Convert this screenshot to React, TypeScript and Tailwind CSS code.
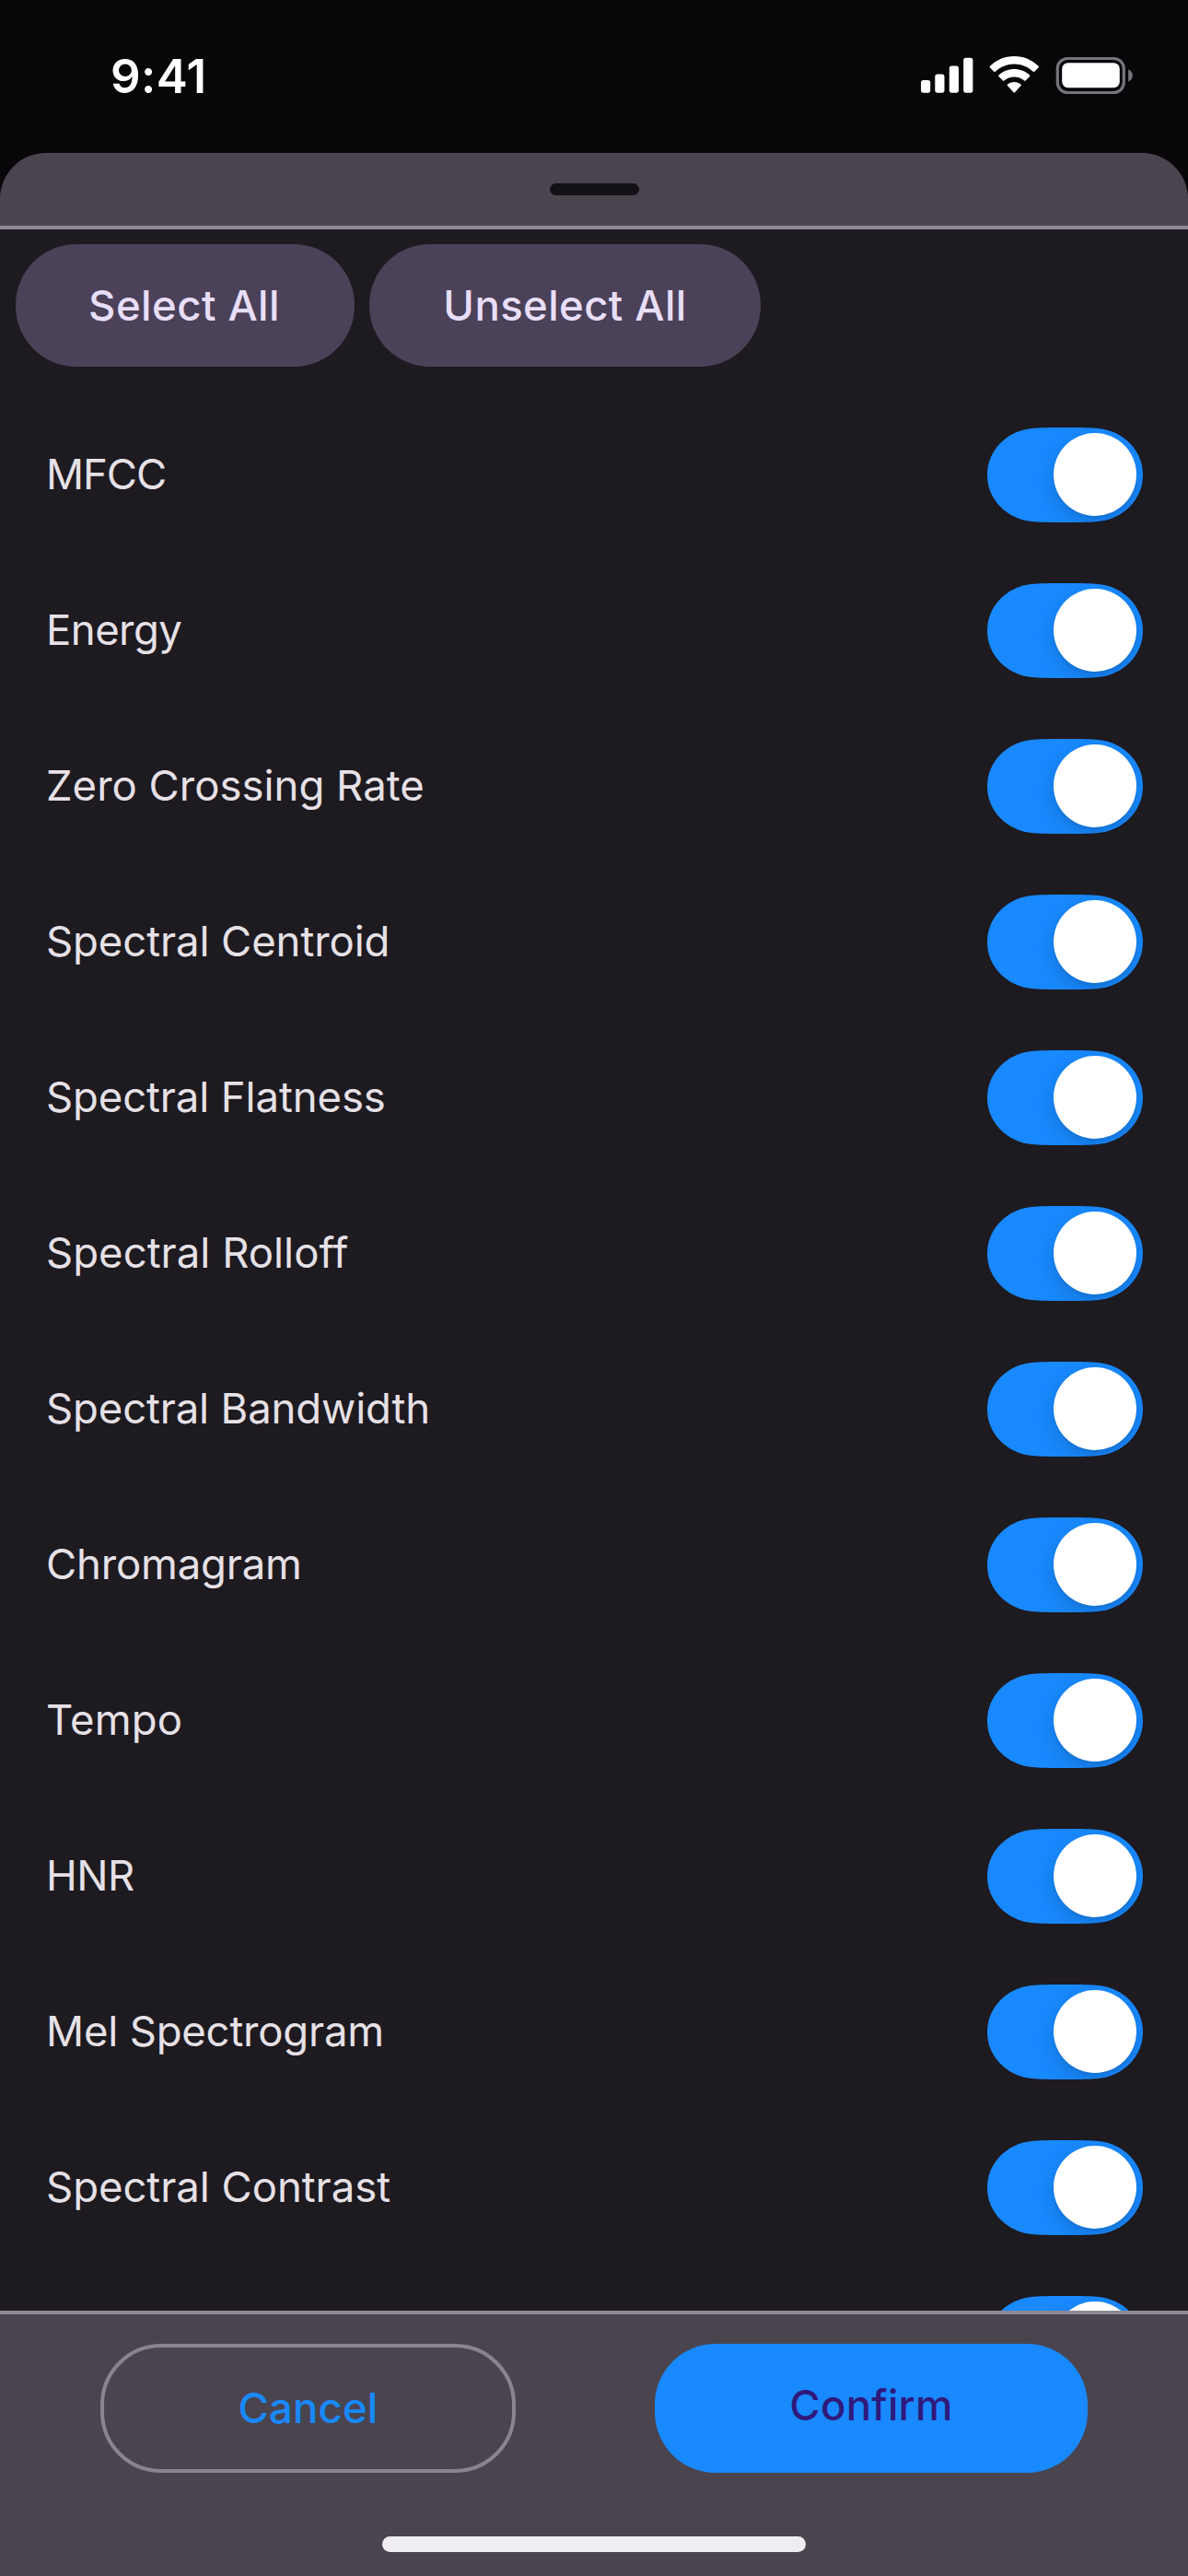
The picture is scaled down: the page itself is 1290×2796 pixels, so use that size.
import React, { useState } from "react";

const FEATURES = [
  { name: "MFCC", tracking: "tracking-[-1.1px]" },
  { name: "Energy", tracking: "tracking-[-0.55px]" },
  { name: "Zero Crossing Rate", tracking: "tracking-[0px]" },
  { name: "Spectral Centroid", tracking: "tracking-[-0.1px]" },
  { name: "Spectral Flatness", tracking: "tracking-[-0.12px]" },
  { name: "Spectral Rolloff", tracking: "tracking-[0.02px]" },
  { name: "Spectral Bandwidth", tracking: "tracking-[-0.15px]" },
  { name: "Chromagram", tracking: "tracking-[-0.2px]" },
  { name: "Tempo", tracking: "tracking-[0.15px]" },
  { name: "HNR", tracking: "tracking-[-0.6px]" },
  { name: "Mel Spectrogram", tracking: "tracking-[-0.2px]" },
  { name: "Spectral Contrast", tracking: "tracking-[-0.05px]" },
  { name: "", tracking: "" },
];

function StatusIcons() {
  return (
    <svg width="230" height="42" viewBox="1000 61 230 42" fill="#fff" aria-hidden="true">
      <rect x="1000" y="87" width="10.2" height="13.7" rx="2.6" />
      <rect x="1015.3" y="80.5" width="10.2" height="20.2" rx="2.6" />
      <rect x="1030.8" y="71.5" width="10.2" height="29.2" rx="2.6" />
      <rect x="1046.2" y="62.7" width="10.2" height="38" rx="2.6" />
      <path d="M1101.3 61C1091.400 61 1081.700 65 1074.900 71.800Q1074.300 72.500 1074.900 73.200L1079.300 77.800Q1080 78.400 1080.700 77.800C1086.400 72.400 1093.600 69.400 1101.300 69.400C1109 69.400 1116.200 72.400 1121.900 77.800Q1122.600 78.400 1123.300 77.800L1127.700 73.200Q1128.300 72.500 1127.700 71.800C1120.900 65 1111.200 61 1101.300 61Z" />
      <path d="M1101.300 75C1095 75 1089.100 77.300 1084.500 81.500Q1083.800 82.200 1084.500 82.900L1089 87.500Q1089.700 88.100 1090.400 87.500C1093.400 84.900 1097.200 83.400 1101.300 83.400C1105.400 83.400 1109.200 84.900 1112.200 87.500Q1112.900 88.100 1113.600 87.500L1118.100 82.900Q1118.800 82.200 1118.100 81.500C1113.500 77.300 1107.600 75 1101.300 75Z" />
      <path d="M1101.300 89C1098.600 89 1096.100 89.900 1094.100 91.500Q1093.300 92.200 1094 92.900L1100.600 100.300Q1101.300 101 1102 100.300L1108.600 92.900Q1109.300 92.200 1108.500 91.500C1106.500 89.900 1104 89 1101.300 89Z" />
      <rect x="1148.300" y="63.500" width="72" height="37" rx="11" fill="none" stroke="#77757a" strokeWidth="3.2" />
      <rect x="1153.200" y="68.200" width="62.600" height="27" rx="6.500" />
      <path d="M1225.200 75.300C1228 76.500 1229.800 79 1229.800 82C1229.800 85 1228 87.500 1225.200 88.700Z" fill="#77757a" />
    </svg>
  );
}

function Switch({ on, onToggle, label }: { on: boolean; onToggle: () => void; label: string }) {
  return (
    <button
      role="switch"
      aria-checked={on}
      aria-label={label}
      onClick={onToggle}
      className="relative h-[103px] w-[169px] shrink-0"
    >
      <svg width="169" height="103" viewBox="0 0 169 103" className="block" aria-hidden="true">
        <path
          d="M84.500 0C101 0 113 .2 121 1C147 3.700 169 24 169 51.500C169 79 147 99.300 121 102C113 102.800 101 103 84.500 103C68 103 56 102.800 48 102C22 99.300 0 79 0 51.500C0 24 22 3.700 48 1C56 .2 68 0 84.500 0Z"
          fill={on ? "#1889fe" : "#39393d"}
        />
      </svg>
      <span className="absolute inset-0 overflow-hidden rounded-full">
        <span
          className={`absolute top-[6px] size-[90px] rounded-full bg-white shadow-[0_8px_22px_rgba(0,0,0,0.15),0_3px_3px_rgba(0,0,0,0.06)] ${on ? "right-[7px]" : "left-[7px]"}`}
        />
      </span>
    </button>
  );
}

export default function App() {
  const [enabled, setEnabled] = useState<boolean[]>(FEATURES.map(() => true));
  const setAll = (value: boolean) => setEnabled(FEATURES.map(() => value));

  return (
    <div className="flex h-[2796px] w-[1290px] flex-col overflow-hidden bg-[#080609] font-['Inter',sans-serif] [font-variant-ligatures:none]">
      <header className="flex h-[166px] shrink-0 items-start justify-between pl-[120px] pr-[60px] pt-[61px]">
        <span className="-mt-[8px] text-[51px] font-semibold leading-[60px] tracking-[0.4px] text-white">9:41</span>
        <StatusIcons />
      </header>

      <main className="flex min-h-0 flex-1 flex-col overflow-hidden rounded-t-[50px] bg-[#1d1a20]">
        <div className="flex h-[83px] shrink-0 justify-center border-b-[4px] border-[#8e8994] bg-[#4a444f] pt-[33px]">
          <div className="h-[13px] w-[97px] rounded-full bg-[#131016]" />
        </div>

        <section className="min-h-0 flex-1 overflow-hidden">
          <div className="flex gap-4 px-[17px] pb-[33px] pt-[16px] text-[45.500px] font-medium leading-[60px] text-[#e8def8]">
            <button onClick={() => setAll(true)} className="h-[133px] w-[368px] rounded-[66px] bg-[#4b4158] pr-[2px] tracking-[0.45px]">
              Select All
            </button>
            <button onClick={() => setAll(false)} className="h-[133px] w-[425px] rounded-[66px] bg-[#4b4158] tracking-[0.4px]">
              Unselect All
            </button>
          </div>
          <ul>
            {FEATURES.map((feature, i) => (
              <li key={i} className="flex h-[169px] items-center justify-between pl-[50px] pr-[49px]">
                <span className={`pb-[2px] text-[45.500px] leading-[60px] text-[#e6e1e6] ${feature.tracking}`}>{feature.name}</span>
                <Switch
                  label={feature.name}
                  on={enabled[i]}
                  onToggle={() => setEnabled(enabled.map((v, j) => (j === i ? !v : v)))}
                />
              </li>
            ))}
          </ul>
        </section>

        <footer className="flex h-[288px] shrink-0 flex-col items-center justify-between border-t-[4px] border-[#8e8994] bg-[#4a444f] pb-[26px] pt-[32px]">
          <div className="flex w-full justify-between pl-[109px] pr-[109px] text-[45.500px] font-medium leading-[60px]">
            <button className="h-[140px] w-[451px] rounded-[66px] border-[4px] border-[#8a8490] tracking-[0.15px] text-[#1889fe]">
              Cancel
            </button>
            <button className="h-[140px] w-[470px] rounded-[66px] bg-[#1889fe] pb-[6px] tracking-[0.25px] text-[#2f1a7c]">
              Confirm
            </button>
          </div>
          <div className="h-[17px] w-[460px] rounded-full bg-[#f0edf2]" />
        </footer>
      </main>
    </div>
  );
}
